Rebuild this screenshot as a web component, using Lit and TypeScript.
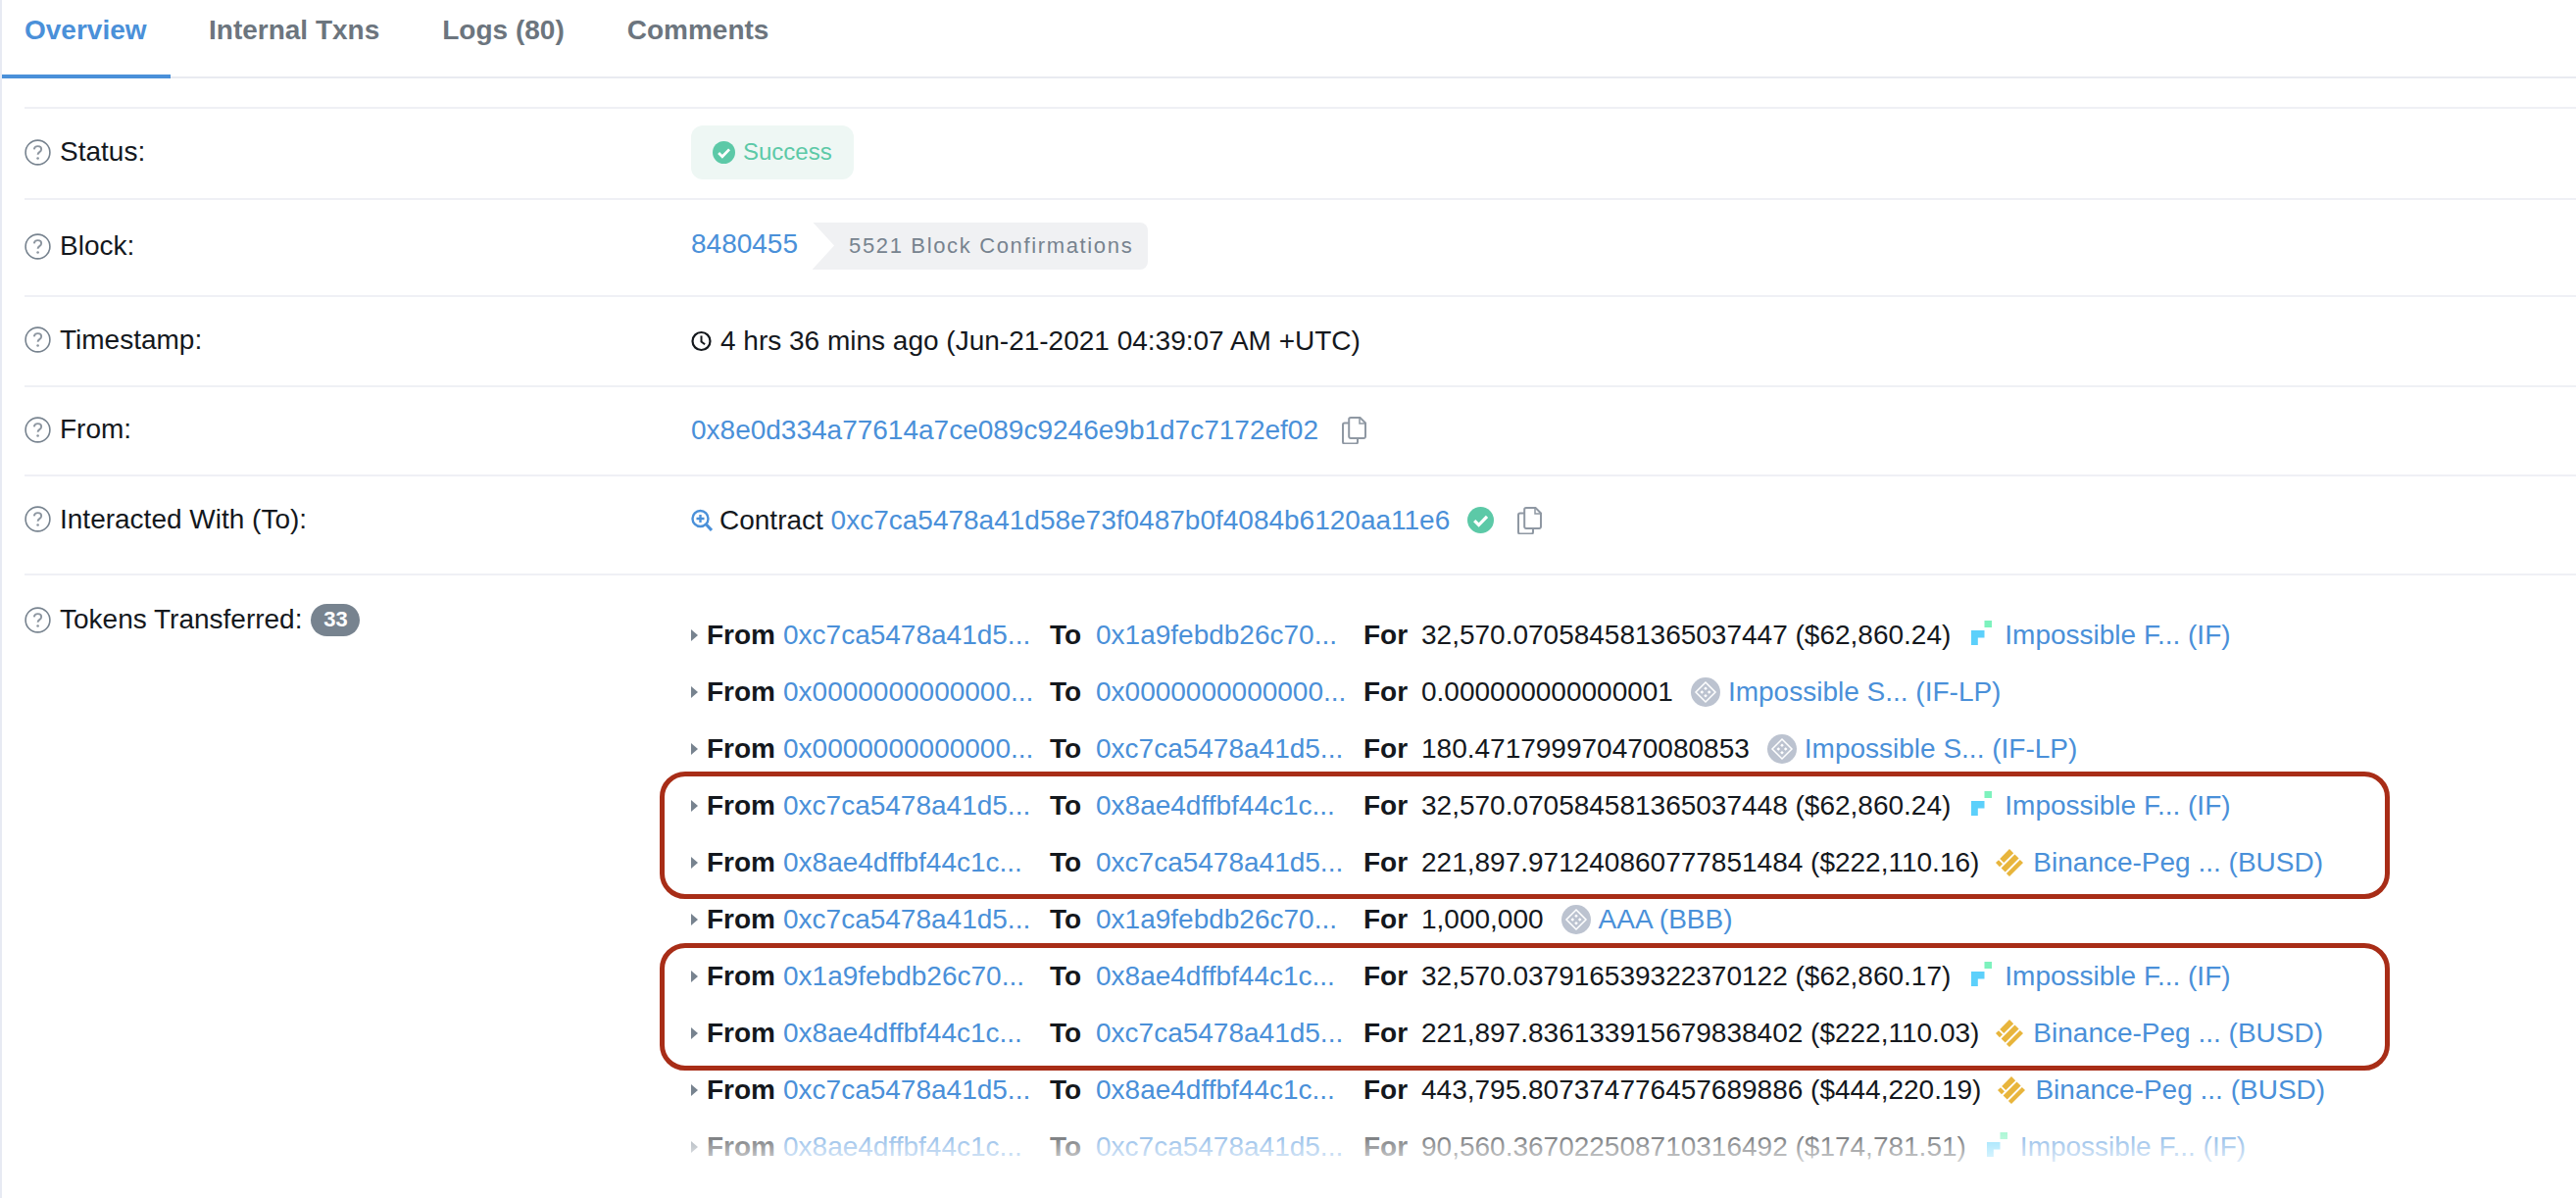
import { LitElement, html, css, svg } from "lit";
import { customElement } from "lit/decorators.js";

type Icon = "if" | "lp" | "busd";
interface Transfer { from: string; to: string; value: string; icon: Icon; name: string; }

const C7 = "0xc7ca5478a41d5...";
const A9 = "0x1a9febdb26c70...";
const Z0 = "0x0000000000000...";
const AE = "0x8ae4dffbf44c1c...";

const transfers: Transfer[] = [
  { from: C7, to: A9, value: "32,570.070584581365037447 ($62,860.24)", icon: "if", name: "Impossible F... (IF)" },
  { from: Z0, to: Z0, value: "0.000000000000001", icon: "lp", name: "Impossible S... (IF-LP)" },
  { from: Z0, to: C7, value: "180.471799970470080853", icon: "lp", name: "Impossible S... (IF-LP)" },
  { from: C7, to: AE, value: "32,570.070584581365037448 ($62,860.24)", icon: "if", name: "Impossible F... (IF)" },
  { from: AE, to: C7, value: "221,897.971240860777851484 ($222,110.16)", icon: "busd", name: "Binance-Peg ... (BUSD)" },
  { from: C7, to: A9, value: "1,000,000", icon: "lp", name: "AAA (BBB)" },
  { from: A9, to: AE, value: "32,570.037916539322370122 ($62,860.17)", icon: "if", name: "Impossible F... (IF)" },
  { from: AE, to: C7, value: "221,897.836133915679838402 ($222,110.03)", icon: "busd", name: "Binance-Peg ... (BUSD)" },
  { from: C7, to: AE, value: "443,795.807374776457689886 ($444,220.19)", icon: "busd", name: "Binance-Peg ... (BUSD)" },
  { from: AE, to: C7, value: "90,560.367022508710316492 ($174,781.51)", icon: "if", name: "Impossible F... (IF)" },
];

const help = html`<svg class="help" viewBox="0 0 27 27" aria-hidden="true">
  <circle cx="13.5" cy="13.5" r="12.4" fill="none" stroke="#77838f" stroke-width="1.6"></circle>
  <path d="M9.8 10.4c.3-2.2 1.8-3.3 3.8-3.3 2.100 0 3.600 1.300 3.600 3.100 0 1.500-.9 2.200-1.900 2.900-1 .7-1.700 1.300-1.700 2.700" fill="none" stroke="#8d96a0" stroke-width="1.900"></path>
  <circle cx="13.600" cy="19.500" r="1.300" fill="#8d96a0"></circle>
</svg>`;

const check = (cls: string) => html`<svg class=${cls} viewBox="0 0 27 27" aria-hidden="true">
  <circle cx="13.5" cy="13.5" r="13.5" fill="#5cc9a7"></circle>
  <path d="M7.200 14.200l4.400 4.300 8.400-8.700" fill="none" stroke="#fff" stroke-width="3.200"></path>
</svg>`;

const copy = html`<svg class="copy" viewBox="0 0 25 28" aria-hidden="true">
  <path d="M7 6.500H2.800A1.800 1.800 0 0 0 1 8.300v17.400a1.800 1.800 0 0 0 1.800 1.800h11.400a1.800 1.800 0 0 0 1.800-1.800V22" fill="none" stroke="#8f98a3" stroke-width="2"></path>
  <path d="M9 1h9.500L24 6.500v13.700a1.800 1.800 0 0 1-1.800 1.800H9a1.800 1.800 0 0 1-1.800-1.800V2.800A1.800 1.800 0 0 1 9 1z" fill="#fff" stroke="#8f98a3" stroke-width="2"></path>
  <path d="M18 1v6h6" fill="none" stroke="#8f98a3" stroke-width="1.500"></path>
</svg>`;

const tokenIcons: Record<Icon, unknown> = {
  if: html`<svg class="tok tok-if" viewBox="0 0 21 25" aria-hidden="true">
    <rect x="13.500" y="0" width="7.500" height="7" fill="#7df2bd"></rect>
    <path d="M0 10h13.500v7.500H6.800V25H0z" fill="#5cd0fb"></path>
  </svg>`,
  lp: html`<svg class="tok tok-lp" viewBox="0 0 30 30" aria-hidden="true">
    <circle cx="15" cy="15" r="15" fill="#bcc3d0"></circle>
    ${svg`<g fill="none" stroke="#fff" stroke-width="1.500">
      <path d="M15 5l10 10-10 10L5 15z"></path>
    </g>
    <g fill="#fff">
      <path d="M15 9.500l1.800 1.800-1.800 1.800-1.800-1.800z"></path>
      <path d="M15 16.900l1.800 1.800-1.800 1.800-1.800-1.800z"></path>
      <path d="M11.300 13.200l1.800 1.800-1.800 1.800-1.800-1.800z"></path>
      <path d="M18.700 13.200l1.800 1.800-1.800 1.800-1.800-1.800z"></path>
    </g>`}
  </svg>`,
  busd: html`<svg class="tok tok-busd" viewBox="0 0 28 28" aria-hidden="true">
    <g fill="#e8b53c">
      <path d="M14 0l4.200 4.200L8.300 14 4.200 9.900z"></path>
      <path d="M19.500 5.500l4.100 4.100L9.700 23.500l-4.100-4.100z"></path>
      <path d="M3 11.200l4 4L4 18.200 0 14z"></path>
      <path d="M24.800 11l3.200 3.100L14 28l-3.100-3.100z"></path>
    </g>
  </svg>`,
};

@customElement("app-root")
export class AppRoot extends LitElement {
  static styles = css`
    :host {
      display: block;
      position: relative;
      height: 1222px;
      overflow: hidden;
      background: #fff;
      color: #14181d;
      font: 28px/34px "Liberation Sans", Arial, sans-serif;
      border-left: 2px solid #e7eaf3;
      box-sizing: border-box;
    }
    a { color: #4a90d9; text-decoration: none; }
    .tabs {
      display: flex;
      height: 80px;
      box-sizing: border-box;
      border-bottom: 2px solid #e9ebf1;
      font-weight: 700;
      color: #6c757e;
    }
    .tab { padding: 14px 25px 0 25px; margin-right: 14px; height: 80px; box-sizing: border-box; }
    .tab.on { color: #4a90d9; border-bottom: 4px solid #4a90d9; margin-left: -2px; padding-left: 25px; width: 174px; }
    .details { margin: 29px 0 0 23px; }
    .row { display: flex; align-items: center; border-top: 2px solid #eff0f5; box-sizing: border-box; }
    .r-status { height: 93px; }
    .r-block { height: 99px; }
    .r-time { height: 92px; }
    .r-from { height: 91px; }
    .r-to { height: 101px; padding-bottom: 9px; }
    .r-tokens { align-items: flex-start; }
    .label { width: 680px; flex: none; display: flex; align-items: center; gap: 9px; padding-bottom: 3px; box-sizing: border-box; }
    .help { width: 27px; height: 27px; flex: none; }
    .value { display: flex; align-items: center; min-width: 0; padding-bottom: 1px; }
    .success {
      display: flex; align-items: center; gap: 8px;
      height: 55px; width: 166px; box-sizing: border-box;
      padding: 0 0 0 22px; margin-top: -2px;
      background: #eef7f4; border-radius: 12px;
      color: #5cc9a7; font-size: 24px;
    }
    .ok-small { width: 23px; height: 23px; }
    .ok { width: 27px; height: 27px; margin-left: 18px; }
    .copy { display: block; width: 25px; height: 28px; }
    .c1 { margin-left: 24px; }
    .c2 { margin-left: 24px; }
    .tag {
      position: relative; display: flex; align-items: center;
      margin: 3px 0 0 15px; width: 342px; height: 48px; box-sizing: border-box;
      padding-left: 37px;
      background: #f0f1f3; border-radius: 0 8px 8px 0;
      color: #77838f; font-size: 22px; letter-spacing: 1.65px;
    }
    .tag::before {
      content: ""; position: absolute; left: 0; top: 0; width: 22px; height: 48px;
      background: #fff; clip-path: polygon(0 0, 100% 50%, 0 100%);
    }
    .block-value { margin-top: -6px; }
    .clock { width: 21px; height: 24px; margin-right: 9px; }
    .lens { width: 22px; height: 24px; margin-right: 7px; }
    .space { white-space: pre; }
    .count {
      margin-left: 0; width: 50px; height: 33px; border-radius: 17px;
      background: #77838f; color: #fff; font-size: 22px; font-weight: 700;
      display: flex; align-items: center; justify-content: center;
    }
    .tok-label { padding-top: 28px; padding-bottom: 0; }
    .list { padding-top: 32px; }
    .tr {
      display: grid;
      grid-template-columns: 16px 78px 272px 47px 273px 59px auto;
      align-items: center; height: 58px; white-space: nowrap;
    }
    .tr b { font-weight: 700; }
    .caret {
      width: 0; height: 0; border-left: 7px solid #77838f;
      border-top: 6.500px solid transparent; border-bottom: 6.500px solid transparent;
    }
    .amount { display: flex; align-items: center; }
    .tok { flex: none; }
    .tok-if { width: 21px; height: 25px; margin: -6px 13px 0 21px; }
    .tok-lp { width: 30px; height: 30px; margin: 0 8px 0 18px; }
    .tok-busd { width: 28px; height: 28px; margin: 0 10px 0 17px; }
    .mark {
      position: absolute; left: 671px; width: 1765px; height: 130px; box-sizing: border-box;
      border: 5px solid #a82d17; border-radius: 26px; pointer-events: none;
    }
    .m1 { top: 787px; }
    .m2 { top: 962px; }
    .fade {
      position: absolute; left: 0; right: 0; bottom: 0; height: 92px; pointer-events: none;
      background: linear-gradient(to bottom, rgba(255,255,255,0) 0%, rgba(255,255,255,.95) 70%, #fff 100%);
    }
  `;

  render() {
    return html`
      <nav class="tabs">
        <div class="tab on">Overview</div>
        <div class="tab">Internal Txns</div>
        <div class="tab">Logs (80)</div>
        <div class="tab">Comments</div>
      </nav>
      <section class="details">
        <div class="row r-status">
          <div class="label">${help}<span>Status:</span></div>
          <div class="value"><div class="success">${check("ok-small")}<span>Success</span></div></div>
        </div>
        <div class="row r-block">
          <div class="label">${help}<span>Block:</span></div>
          <div class="value block-value"><a>8480455</a><div class="tag">5521 Block Confirmations</div></div>
        </div>
        <div class="row r-time">
          <div class="label">${help}<span>Timestamp:</span></div>
          <div class="value">
            <svg class="clock" viewBox="0 0 21 24" aria-hidden="true">
              <circle cx="10.500" cy="12" r="9" fill="none" stroke="#14181d" stroke-width="2.200"></circle>
              <path d="M10.500 6.500V12.500l3.600 2.800" fill="none" stroke="#14181d" stroke-width="2"></path>
            </svg>
            <span>4 hrs 36 mins ago (Jun-21-2021 04:39:07 AM +UTC)</span>
          </div>
        </div>
        <div class="row r-from">
          <div class="label">${help}<span>From:</span></div>
          <div class="value"><a>0x8e0d334a77614a7ce089c9246e9b1d7c7172ef02</a><span class="c1">${copy}</span></div>
        </div>
        <div class="row r-to">
          <div class="label">${help}<span>Interacted With (To):</span></div>
          <div class="value">
            <svg class="lens" viewBox="0 0 22 24" aria-hidden="true">
              <circle cx="9.500" cy="10" r="8" fill="none" stroke="#4a90d9" stroke-width="2.400"></circle>
              <path d="M15.500 16l5.500 6" fill="none" stroke="#4a90d9" stroke-width="3.200"></path>
              <path d="M9.500 6v8M5.500 10h8" fill="none" stroke="#4a90d9" stroke-width="2.400"></path>
            </svg>
            <span class="space">Contract </span><a>0xc7ca5478a41d58e73f0487b0f4084b6120aa11e6</a>
            ${check("ok")}<span class="c2">${copy}</span>
          </div>
        </div>
        <div class="row r-tokens">
          <div class="label tok-label">${help}<span>Tokens Transferred:</span><span class="count">33</span></div>
          <div class="list">
            ${transfers.map((t) => html`
              <div class="tr">
                <i class="caret"></i>
                <b>From</b>
                <a>${t.from}</a>
                <b>To</b>
                <a>${t.to}</a>
                <b>For</b>
                <div class="amount"><span>${t.value}</span>${tokenIcons[t.icon]}<a>${t.name}</a></div>
              </div>`)}
          </div>
        </div>
      </section>
      <div class="mark m1"></div>
      <div class="mark m2"></div>
      <div class="fade"></div>
    `;
  }
}
